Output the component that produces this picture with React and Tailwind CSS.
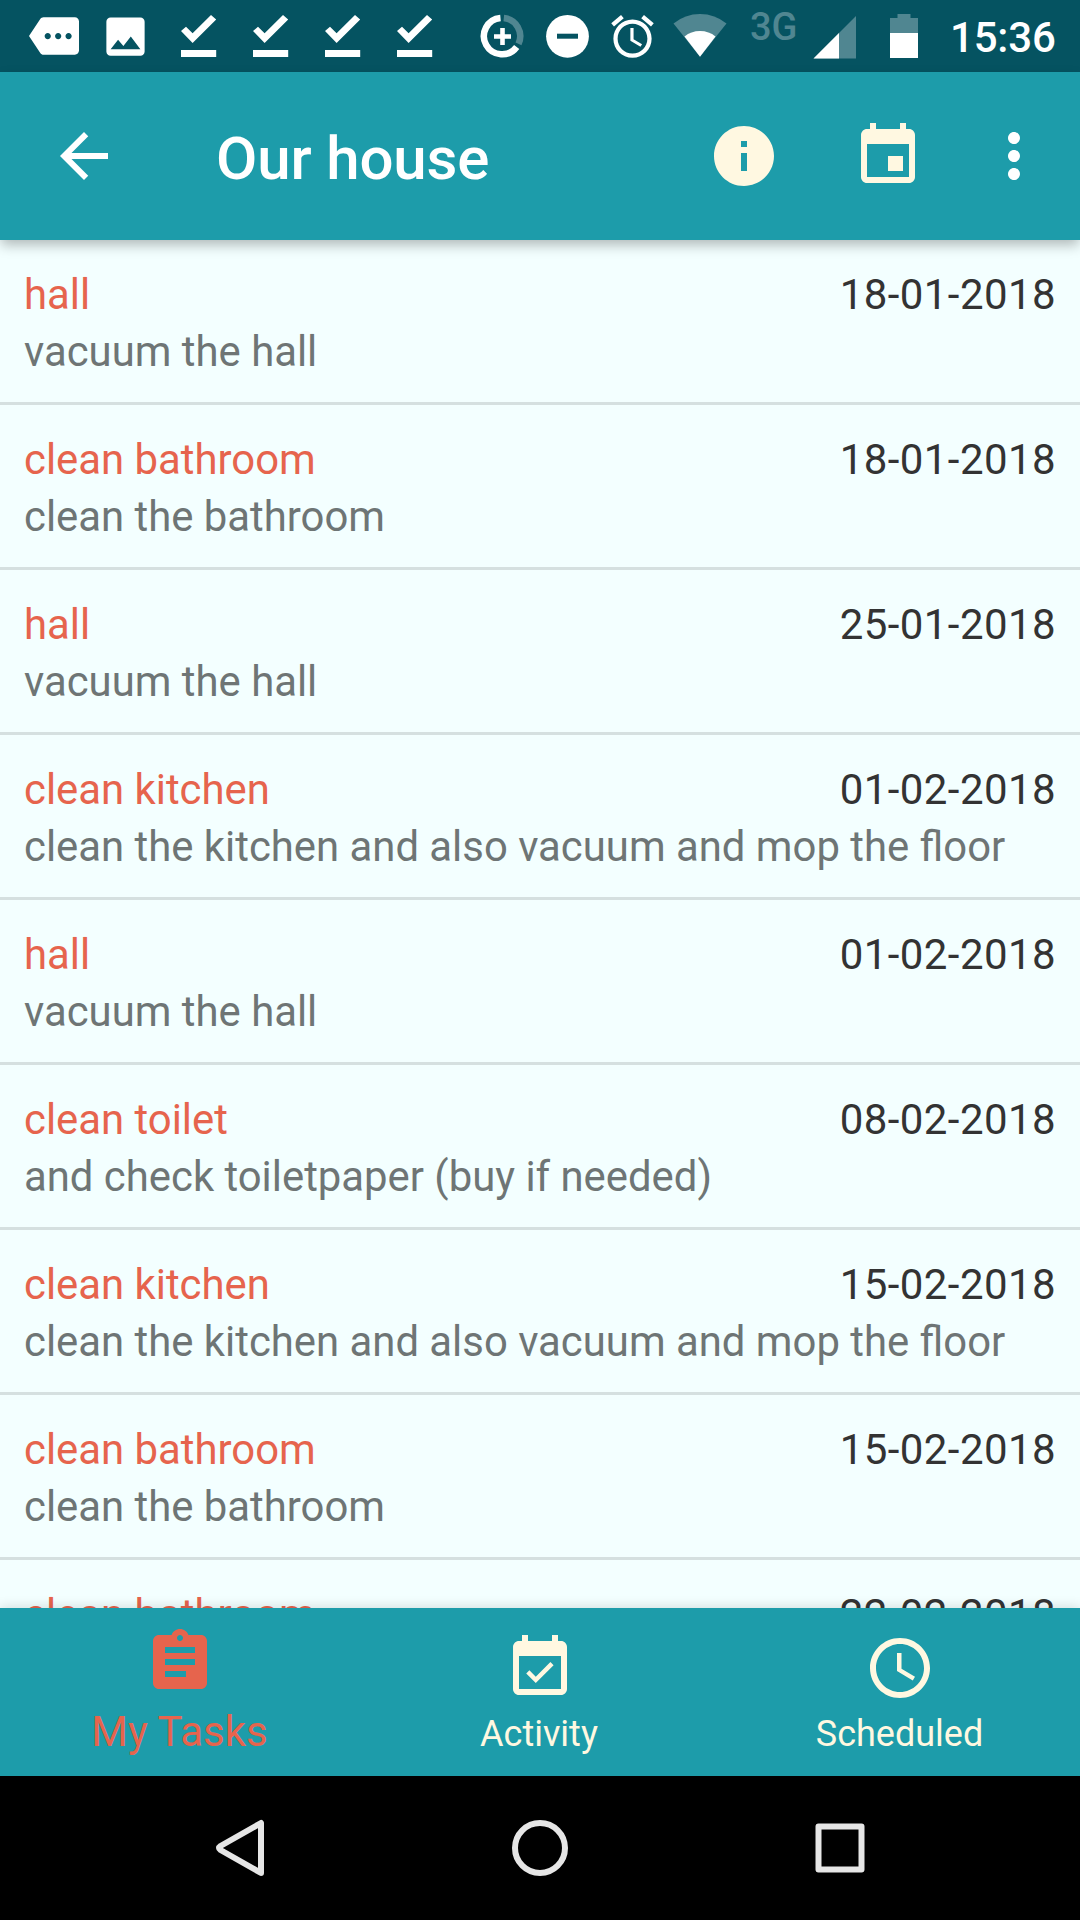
const tasks = [
  ["hall", "vacuum the hall", "18-01-2018"],
  ["clean bathroom", "clean the bathroom", "18-01-2018"],
  ["hall", "vacuum the hall", "25-01-2018"],
  ["clean kitchen", "clean the kitchen and also vacuum and mop the floor", "01-02-2018"],
  ["hall", "vacuum the hall", "01-02-2018"],
  ["clean toilet", "and check toiletpaper (buy if needed)", "08-02-2018"],
  ["clean kitchen", "clean the kitchen and also vacuum and mop the floor", "15-02-2018"],
  ["clean bathroom", "clean the bathroom", "15-02-2018"],
  ["clean bathroom", "clean the bathroom", "22-02-2018"],
];

function Icon({ d, className = "size-[72px]" }) {
  return (
    <svg viewBox="0 0 24 24" fill="currentColor" className={`block shrink-0 ${className}`}>
      <path d={d} />
    </svg>
  );
}

function DoneIcon() {
  return (
    <svg viewBox="0 0 72 72" fill="currentColor" className="block size-[72px] shrink-0">
      <path d="M55 31l5-4.3 6.6 6.6L85 15l5.2 4.6L66.6 43zM55 50h35.2v7H55z" transform="translate(-36 0)" />
    </svg>
  );
}

function StatusBar() {
  return (
    <div className="flex h-[72px] shrink-0 items-center bg-[#055361] pl-[18px] text-white">
      <div className="flex size-[72px] items-center justify-center">
        <Icon
          className="size-[50px]"
          d="M22 3H7c-.69 0-1.23.35-1.59.88L0 12l5.41 8.11c.36.53.9.89 1.59.89h15c1.1 0 2-.9 2-2V5c0-1.1-.9-2-2-2zM9 13.5c-.83 0-1.5-.67-1.5-1.5s.67-1.5 1.5-1.5 1.5.67 1.5 1.5-.67 1.5-1.5 1.5zm5 0c-.83 0-1.5-.67-1.5-1.5s.67-1.5 1.5-1.5 1.5.67 1.5 1.5-.67 1.5-1.5 1.5zm5 0c-.83 0-1.5-.67-1.5-1.5s.67-1.5 1.5-1.5 1.5.67 1.5 1.5-.67 1.5-1.5 1.5z"
        />
      </div>
      <div className="flex size-[72px] items-center justify-center pr-px">
        <Icon
          className="size-[51px]"
          d="M21 19V5c0-1.1-.9-2-2-2H5c-1.1 0-2 .9-2 2v14c0 1.1.9 2 2 2h14c1.1 0 2-.9 2-2zM8.500 13.500l2.500 3.010L14.500 12l4.500 6H5l3.500-4.500z"
        />
      </div>
      <DoneIcon />
      <DoneIcon />
      <DoneIcon />
      <DoneIcon />

      {/* data saver */}
      <svg viewBox="0 0 44 44" className="ml-[30px] block size-[44px] shrink-0" fill="none">
        <path d="M20.500 4A18.200 18.200 0 1 0 36.700 33" stroke="white" strokeWidth="6.500" />
        <path d="M23.800 4A18.200 18.200 0 0 1 38.500 29.800" stroke="#508691" strokeWidth="6.500" />
        <path d="M22.500 14v17M14 22.500h17" stroke="white" strokeWidth="4.600" />
      </svg>
      {/* do not disturb */}
      <svg viewBox="0 0 44 44" className="ml-[21px] block size-[44px] shrink-0">
        <circle cx="22.500" cy="22.300" r="21.400" fill="white" />
        <path d="M12 19.700h21v5H12z" fill="#055361" />
      </svg>
      <Icon
        className="ml-[18px] size-[51px]"
        d="M22 5.720l-4.600-3.860-1.290 1.530 4.600 3.860L22 5.720zM7.880 3.390L6.600 1.860 2 5.710l1.290 1.530 4.590-3.850zM12.500 8H11v6l4.750 2.850.750-1.230-4-2.370V8zM12 4c-4.970 0-9 4.030-9 9s4.020 9 9 9c4.970 0 9-4.030 9-9s-4.030-9-9-9zm0 16c-3.870 0-7-3.130-7-7s3.130-7 7-7 7 3.130 7 7-3.130 7-7 7z"
      />
      {/* wifi */}
      <svg viewBox="0 0 54 44" className="ml-[15px] block h-[44px] w-[54px] shrink-0">
        <path d="M0.500 9.500Q12 0 27 0T53.500 9.500L27 42.700z" fill="#508691" />
        <path d="M11.500 22.500Q18 17 27 17T42.500 22.500L27 42.700z" fill="white" />
      </svg>
      <span className="mb-[19px] ml-[23px] w-[49px] text-[38px] leading-none font-medium text-[#508691]">3G</span>
      {/* mobile signal */}
      <svg viewBox="0 0 44 44" className="mt-[2px] ml-[14px] block size-[44px] shrink-0">
        <path d="M0.500 43.500L43 1V43.500z" fill="#508691" />
        <path d="M0.500 43.500L26 18V43.500z" fill="white" />
      </svg>
      {/* battery */}
      <svg viewBox="0 0 28 44" className="ml-[33px] block h-[44px] w-[28px] shrink-0">
        <path d="M0 4h7.500V0h13v4H28v15H0z" fill="#508691" />
        <path d="M0 19h28v25H0z" fill="white" />
      </svg>
      <span className="mt-[3px] ml-[32px] text-[42px] leading-[50px] font-medium tracking-[-0.2px]">15:36</span>
    </div>
  );
}

function Toolbar() {
  return (
    <header className="relative z-10 flex h-[168px] shrink-0 items-center bg-[#1d9caa] pl-[48px] text-white shadow-[0_6px_12px_-1px_rgba(0,0,0,0.28)]">
      <Icon d="M20 11H7.830l5.590-5.590L12 4l-8 8 8 8 1.410-1.410L7.830 13H20v-2z" />
      <h1 className="mt-[5px] ml-[96px] flex-1 text-[60px] leading-[70px] font-medium tracking-[-0.15px]">Our house</h1>
      <div className="flex items-center gap-[72px] text-[#fff8e1]">
        <Icon d="M12 2C6.480 2 2 6.480 2 12s4.480 10 10 10 10-4.480 10-10S17.520 2 12 2zm1 15h-2v-6h2v6zm0-8h-2V7h2v2z" />
        <Icon d="M17 12h-5v5h5v-5zM16 1v2H8V1H6v2H5c-1.110 0-1.990.9-1.990 2L3 19c0 1.100.890 2 2 2h14c1.100 0 2-.9 2-2V5c0-1.100-.9-2-2-2h-1V1h-2zm3 18H5V8h14v11z" />
      </div>
      <Icon
        className="mr-[30px] ml-[54px] size-[72px]"
        d="M12 8c1.100 0 2-.9 2-2s-.9-2-2-2-2 .9-2 2 .9 2 2 2zm0 2c-1.100 0-2 .9-2 2s.9 2 2 2 2-.9 2-2-.9-2-2-2zm0 6c-1.100 0-2 .9-2 2s.9 2 2 2 2-.9 2-2-.9-2-2-2z"
      />
    </header>
  );
}

function TaskRow({ title, detail, date }) {
  return (
    <li className="h-[165px] shrink-0 border-b-[3px] border-[#d5e0e0] px-[24px] pt-[26px] text-[41.85px] leading-[57px]">
      <div className="flex justify-between">
        <span className="text-[#e6644d]">{title}</span>
        <span className="text-[42px] tracking-[0.42px] text-[#333333]">{date}</span>
      </div>
      <p className="text-[#6e7575]">{detail}</p>
    </li>
  );
}

function BottomTabs() {
  return (
    <nav className="relative z-10 grid h-[168px] shrink-0 grid-cols-3 bg-[#1d9caa] text-[#fff8e1] shadow-[0_0_12px_rgba(0,0,0,0.16)]">
      <div className="flex flex-col items-center pt-[18px] text-[#e6644d]">
        <Icon d="M19 3h-4.180C14.400 1.840 13.300 1 12 1c-1.300 0-2.400.840-2.820 2H5c-1.100 0-2 .9-2 2v14c0 1.100.9 2 2 2h14c1.100 0 2-.9 2-2V5c0-1.100-.9-2-2-2zm-7 0c.550 0 1 .450 1 1s-.450 1-1 1-1-.450-1-1 .450-1 1-1zm2 14H7v-2h7v2zm3-4H7v-2h10v2zm0-4H7V7h10v2z" />
        <span className="mt-[9px] pr-px text-[42px] leading-[50px]">My Tasks</span>
      </div>
      <div className="flex flex-col items-center pt-[24px]">
        <Icon d="M16.530 11.060L15.470 10l-4.880 4.880-2.120-2.120-1.060 1.060L10.590 17l5.940-5.940zM19 3h-1V1h-2v2H8V1H6v2H5c-1.110 0-1.990.9-1.990 2L3 19c0 1.100.890 2 2 2h14c1.100 0 2-.9 2-2V5c0-1.100-.9-2-2-2zm0 16H5V8h14v11z" />
        <span className="mt-[9px] pr-[2px] text-[36px] leading-[42px]">Activity</span>
      </div>
      <div className="flex flex-col items-center pt-[24px]">
        <Icon d="M11.990 2C6.470 2 2 6.480 2 12s4.470 10 9.990 10C17.520 22 22 17.520 22 12S17.520 2 11.990 2zM12 20c-4.420 0-8-3.580-8-8s3.580-8 8-8 8 3.580 8 8-3.580 8-8 8zm.5-13H11v6l5.250 3.150.750-1.230-4.500-2.670z" />
        <span className="mt-[9px] pr-px text-[36px] leading-[42px]">Scheduled</span>
      </div>
    </nav>
  );
}

function SystemNav() {
  return (
    <div className="relative z-20 flex h-[144px] shrink-0 items-center justify-center gap-[240px] bg-black">
      <svg viewBox="0 0 60 60" className="size-[60px]" fill="none" stroke="#e6e6e6" strokeWidth="6" strokeLinejoin="round">
        <path d="M51 5v50L10.500 32Q7.500 30 10.500 28z" />
      </svg>
      <svg viewBox="0 0 60 60" className="size-[60px]" fill="none" stroke="#e6e6e6" strokeWidth="6">
        <circle cx="30" cy="30" r="25" />
      </svg>
      <svg viewBox="0 0 60 60" className="size-[60px]" fill="none" stroke="#e6e6e6" strokeWidth="6" strokeLinejoin="round">
        <path d="M8.500 8.500h43v43h-43z" />
      </svg>
    </div>
  );
}

export default function App() {
  return (
    <div className="flex h-[1920px] w-[1080px] flex-col overflow-hidden bg-[#f3ffff] font-['Roboto',sans-serif]">
      <StatusBar />
      <Toolbar />
      <ul className="flex min-h-0 flex-1 flex-col overflow-hidden">
        {tasks.map(([title, detail, date], i) => (
          <TaskRow key={i} title={title} detail={detail} date={date} />
        ))}
      </ul>
      <BottomTabs />
      <SystemNav />
    </div>
  );
}
